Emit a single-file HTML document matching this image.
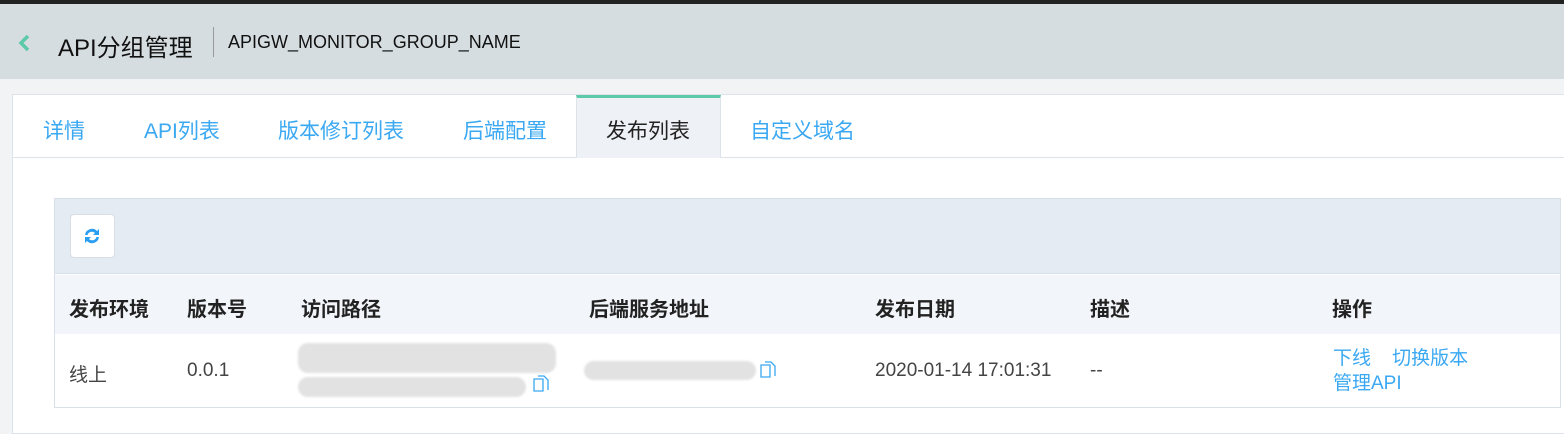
<!DOCTYPE html>
<html><head><meta charset="utf-8"><style>
*{margin:0;padding:0;box-sizing:border-box}
body{width:1564px;height:419px;overflow:hidden;background:#f2f3f5;font-family:"Liberation Sans","Noto Sans CJK SC",sans-serif;position:relative}
.a{position:absolute;white-space:nowrap}
.tab{position:absolute;top:115px;font-size:21px;color:#3aa8f2}
.th{position:absolute;top:293px;font-size:20px;font-weight:bold;color:#222}
.td{position:absolute;top:360px;font-size:19px;color:#444}
.blur{position:absolute;background:#e2e2e2;border-radius:10px;filter:blur(1px)}
</style></head><body>
<div class="a" style="left:0;top:0;width:1564px;height:4px;background:#222"></div>
<div class="a" style="left:0;top:4px;width:1564px;height:75px;background:#d5dde0"></div>
<svg class="a" style="left:16px;top:33px" width="16" height="20"><path d="M12 3 L5 10 L12 17" stroke="#5ccaa8" stroke-width="3.5" fill="none"/></svg>
<div class="a" style="left:58px;top:28px;font-size:24px;color:#111">API分组管理</div>
<div class="a" style="left:213px;top:27px;width:1px;height:30px;background:#999"></div>
<div class="a" style="left:228px;top:32px;font-size:18px;color:#111">APIGW_MONITOR_GROUP_NAME</div>
<div class="a" style="left:12px;top:94px;width:1560px;height:340px;background:#fff;border:1px solid #dde3ea"></div>
<div class="a" style="left:12px;top:157px;width:1560px;height:1px;background:#dde3ea"></div>
<div class="a" style="left:576px;top:95px;width:145px;height:63px;background:#eef1f5;border-left:1px solid #dde3ea;border-right:1px solid #dde3ea;border-top:3px solid #5ccaa8"></div>
<div class="tab" style="left:43px">详情</div>
<div class="tab" style="left:144px">API列表</div>
<div class="tab" style="left:278px">版本修订列表</div>
<div class="tab" style="left:463px">后端配置</div>
<div class="tab" style="left:606px;color:#222">发布列表</div>
<div class="tab" style="left:750px">自定义域名</div>
<div class="a" style="left:54px;top:198px;width:1507px;height:210px;border:1px solid #d8dfe8;background:#fff"></div>
<div class="a" style="left:55px;top:199px;width:1505px;height:75px;background:#e4ebf3;border-bottom:1px solid #d8dfe8"></div>
<div class="a" style="left:55px;top:275px;width:1505px;height:59px;background:#f2f5fa"></div>
<div class="a" style="left:70px;top:214px;width:45px;height:44px;background:#fff;border:1px solid #d8dfe8;border-radius:4px"></div>
<svg class="a" style="left:81px;top:225px" width="22" height="22" viewBox="0 0 22 22"><path d="M4 10 A7 7 0 0 1 16 6 L18 4 L18 10 L12 10 L14 8 A4.5 4.5 0 0 0 6.5 10 Z" fill="#2a9ff0"/><path d="M18 12 A7 7 0 0 1 6 16 L4 18 L4 12 L10 12 L8 14 A4.5 4.5 0 0 0 15.5 12 Z" fill="#2a9ff0"/></svg>
<div class="th" style="left:69px">发布环境</div>
<div class="th" style="left:187px">版本号</div>
<div class="th" style="left:301px">访问路径</div>
<div class="th" style="left:589px">后端服务地址</div>
<div class="th" style="left:875px">发布日期</div>
<div class="th" style="left:1090px">描述</div>
<div class="th" style="left:1332px">操作</div>
<div class="td" style="left:69px">线上</div>
<div class="td" style="left:187px">0.0.1</div>
<div class="blur" style="left:298px;top:343px;width:258px;height:30px"></div>
<div class="blur" style="left:298px;top:377px;width:228px;height:20px"></div>
<svg class="a" style="left:532px;top:375px" width="18" height="18"><path d="M2 4h9v12H2z M6 1h6l4 4v10" stroke="#3aa8f2" stroke-width="1.3" fill="none"/></svg>
<div class="blur" style="left:584px;top:361px;width:172px;height:19px"></div>
<svg class="a" style="left:759px;top:361px" width="18" height="18"><path d="M2 4h9v12H2z M6 1h6l4 4v10" stroke="#3aa8f2" stroke-width="1.3" fill="none"/></svg>
<div class="td" style="left:875px">2020-01-14 17:01:31</div>
<div class="td" style="left:1090px">--</div>
<div class="a" style="left:1333px;top:346px;font-size:19px;color:#3aa8f2;line-height:25px">下线&nbsp;&nbsp;&nbsp;&nbsp;切换版本<br>管理API</div>
</body></html>
